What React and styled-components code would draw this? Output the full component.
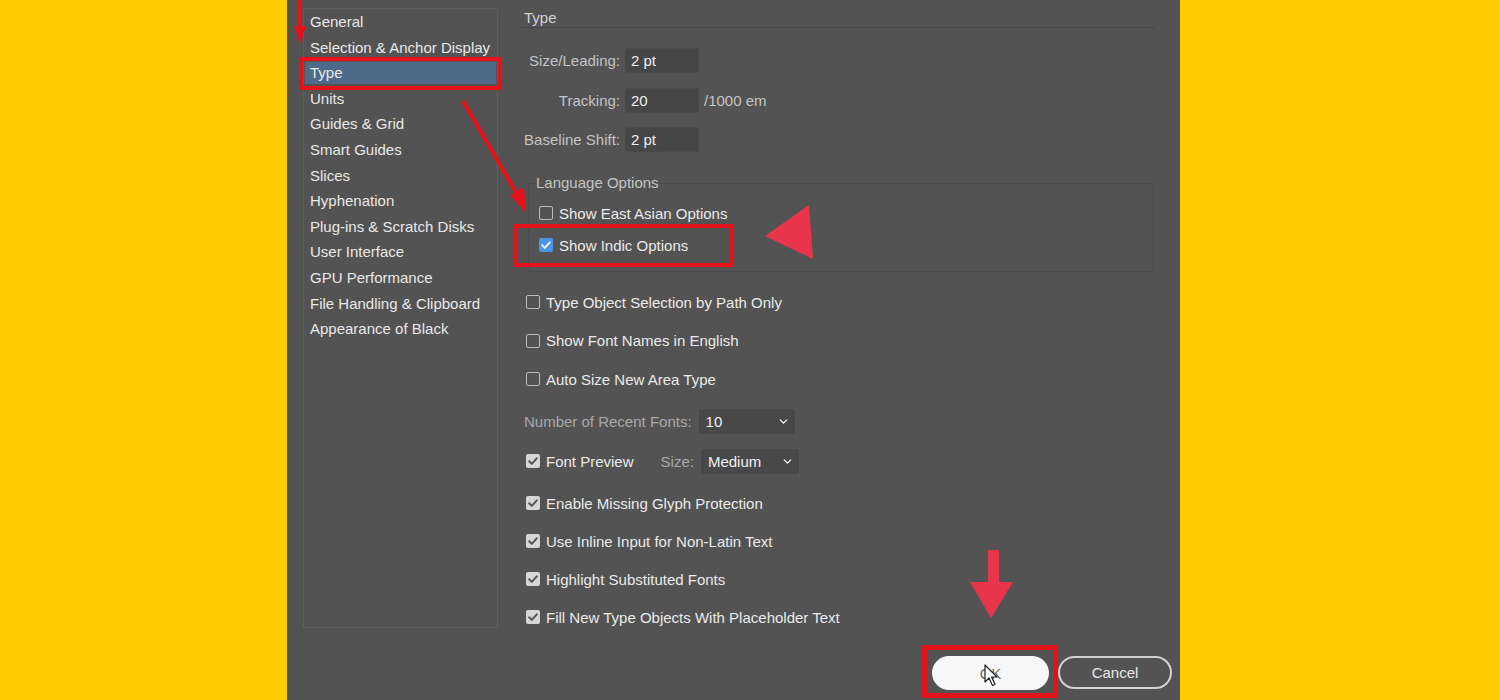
import React from "react"
import styled, { createGlobalStyle } from "styled-components"
import { ChevronDown } from "lucide-react"

const GlobalStyle = createGlobalStyle`
	html, body {
		margin: 0;
		padding: 0;
	}
	body {
		background: #ffcc00;
		font-family: "Liberation Sans", Arial, sans-serif;
		overflow: hidden;
	}
`

const Page = styled.div`
	position: relative;
	width: 1500px;
	height: 700px;
	background: #ffcc00;
	overflow: hidden;
`

const Dialog = styled.div`
	margin-left: 287px;
	width: 893px;
	height: 700px;
	box-sizing: border-box;
	background: #535353;
	padding: 8px 8px 0 16px;
	display: grid;
	grid-template-columns: 195px 1fr;
	grid-template-rows: 620px 1fr;
	column-gap: 22px;
	color: #e8e8e8;
	font-size: 15px;
`

const Sidebar = styled.ul`
	margin: 0;
	padding: 2px 0 0;
	list-style: none;
	border: 1px solid #5e5e5e;
	box-sizing: border-box;
	display: flex;
	flex-direction: column;
	gap: 3.6px;
`

const NavItem = styled.li`
	height: 22px;
	line-height: 22px;
	margin: 0 1px;
	padding-left: 5px;
	white-space: nowrap;
	color: #e8e8e8;
	background: ${(p) => (p.$active ? "#4f6a89" : "transparent")};
`

const Main = styled.div`
	display: flex;
	flex-direction: column;
	padding-right: 17px;
`

const SectionTitle = styled.div`
	height: 19px;
	line-height: 19px;
	padding-left: 4px;
	color: #d2d2d2;
	border-bottom: 1px solid #474747;
`

const FieldGrid = styled.div`
	margin-top: 20px;
	display: grid;
	grid-template-columns: 100px 74px auto;
	grid-auto-rows: 25px;
	column-gap: 5px;
	row-gap: 14.5px;
	align-items: center;
`

const FieldLabel = styled.span`
	text-align: right;
	color: #c4c4c4;
	white-space: nowrap;
`

const TextInput = styled.div`
	height: 25px;
	box-sizing: border-box;
	background: #464646;
	border: 1px solid #4b4b4b;
	border-radius: 2px;
	padding-left: 5px;
	line-height: 23px;
	color: #ededed;
`

const Unit = styled.span`
	color: #c4c4c4;
`

const Group = styled.fieldset`
	margin: 22px 1px 0 8px;
	padding: 0 0 16px 7px;
	border: 1px solid #4b4b4b;
	border-radius: 2px;
	min-width: 0;
`

const Legend = styled.legend`
	padding: 0;
	height: 18px;
	line-height: 18px;
	color: #c4c4c4;
`

const GroupRows = styled.div`
	margin-top: 11px;
	padding-left: 3px;
	display: flex;
	flex-direction: column;
	gap: 12px;
`

const Options = styled.div`
	display: flex;
	flex-direction: column;
`

const Row = styled.div`
	height: ${(p) => p.$h || 25}px;
	margin-top: ${(p) => p.$mt || 0}px;
	padding-left: ${(p) => p.$pl ?? 6}px;
	display: flex;
	align-items: center;
	gap: 6px;
	white-space: nowrap;
`

const Box = styled.span`
	width: 14px;
	height: 14px;
	flex: none;
	box-sizing: border-box;
	border-radius: 2px;
	display: inline-flex;
	align-items: center;
	justify-content: center;
	border: ${(p) => (p.$checked ? "none" : "1.5px solid #bcbcbc")};
	background: ${(p) =>
		p.$blue ? "#4c94e4" : p.$checked ? "#d6d6d6" : "transparent"};
`

const OptionText = styled.span`
	color: #eaeaea;
`

const DimLabel = styled.span`
	color: #a9a9a9;
	margin-left: ${(p) => p.$ml || 0}px;
	margin-right: 1px;
`

const Select = styled.div`
	width: ${(p) => p.$w}px;
	height: 25px;
	box-sizing: border-box;
	background: #484848;
	border-radius: 2px;
	display: flex;
	align-items: center;
	justify-content: space-between;
	padding: 0 5px 0 7px;
	color: #f0f0f0;
`

const Footer = styled.div`
	grid-column: 1 / -1;
	display: flex;
	justify-content: flex-end;
	align-items: flex-start;
	padding-top: 28px;
	gap: 9px;
`

const Button = styled.button`
	position: relative;
	box-sizing: border-box;
	width: ${(p) => p.$w}px;
	height: ${(p) => (p.$primary ? 34 : 33)}px;
	border-radius: 17px;
	font-family: inherit;
	font-size: 15px;
	padding: 0;
	background: ${(p) => (p.$primary ? "#f7f7f7" : "transparent")};
	border: ${(p) => (p.$primary ? "none" : "2px solid #d2d2d2")};
	color: ${(p) => (p.$primary ? "#6a6a6a" : "#e8e8e8")};
`

const Cursor = styled.svg`
	position: absolute;
	left: 52px;
	top: 8px;
`

const Overlay = styled.svg`
	position: absolute;
	left: 0;
	top: 0;
	pointer-events: none;
`

const navItems = [
	"General",
	"Selection & Anchor Display",
	"Type",
	"Units",
	"Guides & Grid",
	"Smart Guides",
	"Slices",
	"Hyphenation",
	"Plug-ins & Scratch Disks",
	"User Interface",
	"GPU Performance",
	"File Handling & Clipboard",
	"Appearance of Black",
]

const Checkbox = ({ checked, blue }) => (
	<Box $checked={checked} $blue={blue}>
		{checked && (
			<svg width="12" height="12" viewBox="0 0 12 12">
				<path
					d="M2.2 6.3 L4.8 8.9 L9.8 3.3"
					fill="none"
					stroke={blue ? "#eaf3ff" : "#555"}
					strokeWidth="2"
					strokeLinecap="round"
					strokeLinejoin="round"
				/>
			</svg>
		)}
	</Box>
)

const App = () => {
	return (
		<>
			<GlobalStyle />
			<Page>
				<Dialog>
					<Sidebar>
						{navItems.map((item) => (
							<NavItem key={item} $active={item === "Type"}>
								{item}
							</NavItem>
						))}
					</Sidebar>

					<Main>
						<SectionTitle>Type</SectionTitle>
						<FieldGrid>
							<FieldLabel>Size/Leading:</FieldLabel>
							<TextInput>2 pt</TextInput>
							<span />
							<FieldLabel>Tracking:</FieldLabel>
							<TextInput>20</TextInput>
							<Unit>/1000 em</Unit>
							<FieldLabel>Baseline Shift:</FieldLabel>
							<TextInput>2 pt</TextInput>
							<span />
						</FieldGrid>

						<Group>
							<Legend>Language Options</Legend>
							<GroupRows>
								<Row $h={20} $pl={0}>
									<Checkbox />
									<OptionText>Show East Asian Options</OptionText>
								</Row>
								<Row $h={20} $pl={0}>
									<Checkbox checked blue />
									<OptionText>Show Indic Options</OptionText>
								</Row>
							</GroupRows>
						</Group>

						<Options>
							<Row $mt={17.5}>
								<Checkbox />
								<OptionText>Type Object Selection by Path Only</OptionText>
							</Row>
							<Row $mt={13.5}>
								<Checkbox />
								<OptionText>Show Font Names in English</OptionText>
							</Row>
							<Row $mt={13.5}>
								<Checkbox />
								<OptionText>Auto Size New Area Type</OptionText>
							</Row>
							<Row $mt={17} $pl={4}>
								<DimLabel>Number of Recent Fonts:</DimLabel>
								<Select $w={96}>
									10 <ChevronDown size={13} strokeWidth={2.5} />
								</Select>
							</Row>
							<Row $mt={15}>
								<Checkbox checked />
								<OptionText>Font Preview</OptionText>
								<DimLabel $ml={21}>Size:</DimLabel>
								<Select $w={98}>
									Medium <ChevronDown size={13} strokeWidth={2.5} />
								</Select>
							</Row>
							<Row $mt={17}>
								<Checkbox checked />
								<OptionText>Enable Missing Glyph Protection</OptionText>
							</Row>
							<Row $mt={13}>
								<Checkbox checked />
								<OptionText>Use Inline Input for Non-Latin Text</OptionText>
							</Row>
							<Row $mt={13}>
								<Checkbox checked />
								<OptionText>Highlight Substituted Fonts</OptionText>
							</Row>
							<Row $mt={13}>
								<Checkbox checked />
								<OptionText>Fill New Type Objects With Placeholder Text</OptionText>
							</Row>
						</Options>
					</Main>

					<Footer>
						<Button $primary $w={117}>
							OK
							<Cursor width="16" height="24" viewBox="0 0 16 24">
								<path
									d="M1 1 L1 18 L5 14 L8.5 21.5 L11 20.3 L7.6 13 L13 13 Z"
									fill="#fff"
									stroke="#222"
									strokeWidth="1.2"
									strokeLinejoin="round"
								/>
							</Cursor>
						</Button>
						<Button $w={114}>Cancel</Button>
					</Footer>
				</Dialog>

				{/* tutorial annotations drawn over the dialog */}
				<Overlay width="1500" height="700" viewBox="0 0 1500 700">
					<line x1="300" y1="0" x2="300" y2="30" stroke="#e5121b" strokeWidth="4" />
					<polygon points="294,26 306,26 300,44" fill="#e5121b" />
					<rect x="301" y="59" width="199" height="29" fill="none" stroke="#e5121b" strokeWidth="4" />
					<line x1="463" y1="101" x2="517" y2="194" stroke="#e5121b" strokeWidth="4" />
					<polygon points="510,195 524,187 526,213" fill="#e5121b" />
					<rect x="516" y="226" width="215" height="39" fill="none" stroke="#e5121b" strokeWidth="4" />
					<polygon points="765,236 809,205 813,259" fill="#e8354b" />
					<rect x="988" y="550" width="11" height="34" fill="#e8354b" />
					<polygon points="970,582 1013,582 991,618" fill="#e8354b" />
					<rect x="924.5" y="647.5" width="131" height="48" fill="none" stroke="#e5121b" strokeWidth="5" />
				</Overlay>
			</Page>
		</>
	)
}

export default App
